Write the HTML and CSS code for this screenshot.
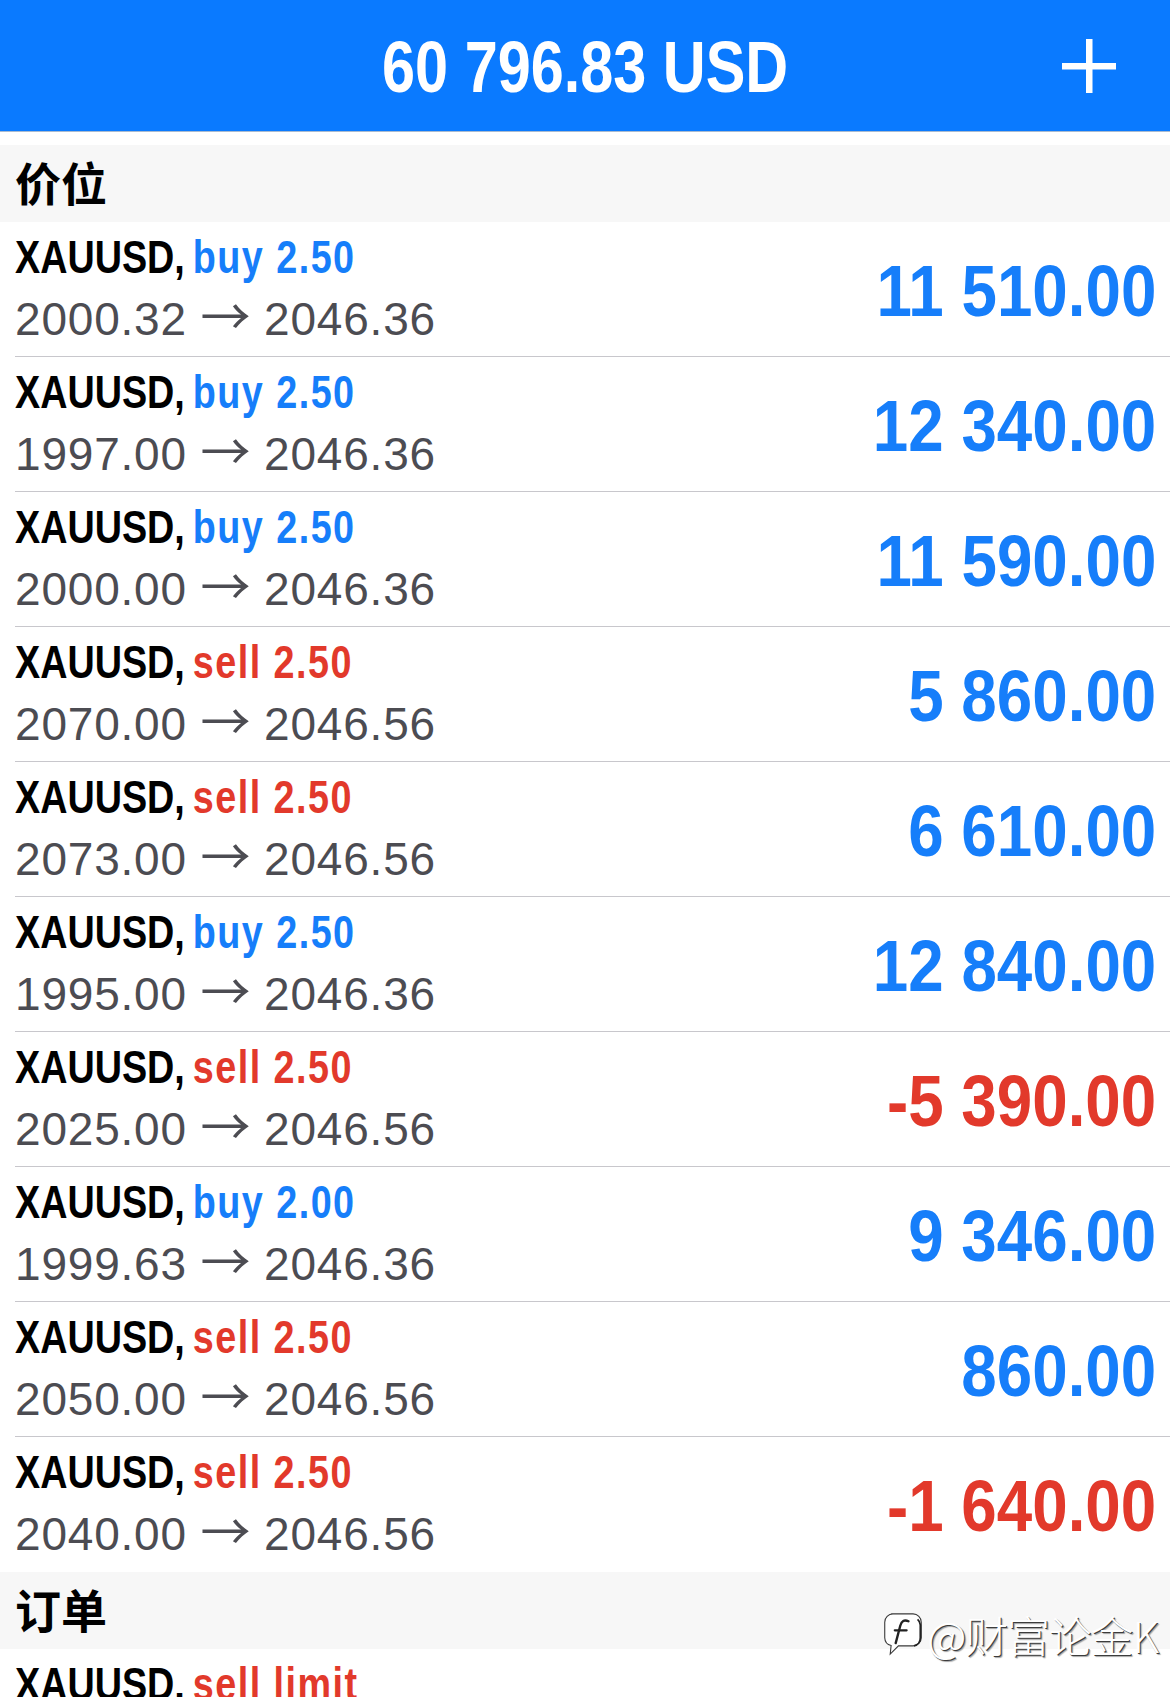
FILE: index.html
```html
<!DOCTYPE html>
<html lang="zh">
<head>
<meta charset="utf-8">
<title>Trade</title>
<link rel="stylesheet" href="styles.css">
</head>
<body>
<header class="navbar">
  <div class="nav-title">60 796.83 USD</div>
  <svg class="nav-add" viewBox="0 0 54 54" width="54" height="54" aria-label="add">
    <rect x="24" y="0" width="6.5" height="54" fill="#fff"/>
    <rect x="0" y="24" width="54" height="6.5" fill="#fff"/>
  </svg>
</header>
<main class="content">
  <section class="section">
    <h2 class="section-header">价位</h2>
    <div class="row"><div class="row-inner"><div class="info"><div class="title-line">XAUUSD, <span class="buy">buy 2.50</span></div><div class="price-line">2000.32 <span class="arrow">→</span> 2046.36</div></div><div class="profit pos">11 510.00</div></div></div>
    <div class="row"><div class="row-inner"><div class="info"><div class="title-line">XAUUSD, <span class="buy">buy 2.50</span></div><div class="price-line">1997.00 <span class="arrow">→</span> 2046.36</div></div><div class="profit pos">12 340.00</div></div></div>
    <div class="row"><div class="row-inner"><div class="info"><div class="title-line">XAUUSD, <span class="buy">buy 2.50</span></div><div class="price-line">2000.00 <span class="arrow">→</span> 2046.36</div></div><div class="profit pos">11 590.00</div></div></div>
    <div class="row"><div class="row-inner"><div class="info"><div class="title-line">XAUUSD, <span class="sell">sell 2.50</span></div><div class="price-line">2070.00 <span class="arrow">→</span> 2046.56</div></div><div class="profit pos">5 860.00</div></div></div>
    <div class="row"><div class="row-inner"><div class="info"><div class="title-line">XAUUSD, <span class="sell">sell 2.50</span></div><div class="price-line">2073.00 <span class="arrow">→</span> 2046.56</div></div><div class="profit pos">6 610.00</div></div></div>
    <div class="row"><div class="row-inner"><div class="info"><div class="title-line">XAUUSD, <span class="buy">buy 2.50</span></div><div class="price-line">1995.00 <span class="arrow">→</span> 2046.36</div></div><div class="profit pos">12 840.00</div></div></div>
    <div class="row"><div class="row-inner"><div class="info"><div class="title-line">XAUUSD, <span class="sell">sell 2.50</span></div><div class="price-line">2025.00 <span class="arrow">→</span> 2046.56</div></div><div class="profit neg">-5 390.00</div></div></div>
    <div class="row"><div class="row-inner"><div class="info"><div class="title-line">XAUUSD, <span class="buy">buy 2.00</span></div><div class="price-line">1999.63 <span class="arrow">→</span> 2046.36</div></div><div class="profit pos">9 346.00</div></div></div>
    <div class="row"><div class="row-inner"><div class="info"><div class="title-line">XAUUSD, <span class="sell">sell 2.50</span></div><div class="price-line">2050.00 <span class="arrow">→</span> 2046.56</div></div><div class="profit pos">860.00</div></div></div>
    <div class="row"><div class="row-inner"><div class="info"><div class="title-line">XAUUSD, <span class="sell">sell 2.50</span></div><div class="price-line">2040.00 <span class="arrow">→</span> 2046.56</div></div><div class="profit neg">-1 640.00</div></div></div>
  </section>
  <section class="section">
    <h2 class="section-header">订单
      <div class="watermark">
        <svg class="wm-logo" viewBox="0 0 46 50" width="42" height="46" aria-hidden="true">
          <path d="M10 3 H34 a9 9 0 0 1 9 9 V29 a9 9 0 0 1 -9 9 H18 l-9 9 l1 -9.5 a9 9 0 0 1 -7 -8.5 V12 a9 9 0 0 1 9 -9z" fill="#fff" stroke="#3a3a3a" stroke-width="1.2"/>
          <path d="M39 9 a9 9 0 0 1 3 6 V29 a9 9 0 0 1 -7 9" fill="none" stroke="#222" stroke-width="2"/>
          <path d="M29 11 q-7 -3 -9 5 l-5 19" fill="none" stroke="#222" stroke-width="2.6" stroke-linecap="round"/>
          <path d="M14 21 h13" fill="none" stroke="#222" stroke-width="2.4" stroke-linecap="round"/>
        </svg>
        <span class="wm-text">@财富论金K</span>
      </div>
    </h2>
    <div class="row"><div class="row-inner"><div class="info"><div class="title-line">XAUUSD, <span class="sell">sell limit</span></div></div></div></div>
  </section>
</main>
</body>
</html>
```
FILE: styles.css
```css
* {
  box-sizing: border-box;
  margin: 0;
  padding: 0;
}

body {
  margin: 0;
  background: #ffffff;
  font-family: "Liberation Sans", Arial, sans-serif;
  color: #000;
}

.navbar {
  display: grid;
  grid-template-columns: 1fr auto 1fr;
  align-items: center;
  height: 132px;
  background: #0a7aff;
  border-bottom: 1px solid #a9bbd0;
}

.nav-title {
  grid-column: 2;
  font-family: "Liberation Sans", Arial, sans-serif;
  font-weight: 700;
  font-size: 72px;
  line-height: 128px;
  padding-top: 3px;
  color: #ffffff;
  white-space: nowrap;
  transform: scaleX(0.825);
  transform-origin: center;
}

.nav-add {
  grid-column: 3;
  justify-self: end;
  margin-right: 54px;
  display: block;
}

.content {
  padding-top: 13px;
}

.section-header {
  position: relative;
  height: 77px;
  padding-left: 15px;
  background: #f7f7f7;
  font-family: "Noto Sans CJK SC", sans-serif;
  font-weight: 700;
  font-size: 46px;
  line-height: 72px;
  color: #000;
}

.row {
  padding-left: 15px;
}

.row-inner {
  display: flex;
  justify-content: space-between;
  align-items: flex-start;
  height: 135px;
  padding: 4px 14px 6px 0;
  border-bottom: 1px solid #c8c7cc;
}

.row:last-child .row-inner {
  border-bottom: none;
}

.title-line {
  font-family: "Liberation Sans", Arial, sans-serif;
  font-weight: 700;
  font-size: 46px;
  line-height: 62px;
  white-space: nowrap;
  color: #000;
  word-spacing: -3px;
  transform: scaleX(0.82);
  transform-origin: left center;
}

.buy,
.sell {
  letter-spacing: 1.8px;
  word-spacing: 0;
}

.buy {
  color: #167efa;
}

.sell {
  color: #e2392b;
}

.price-line {
  font-family: "Liberation Sans", Arial, sans-serif;
  font-weight: 400;
  font-size: 46px;
  line-height: 62px;
  letter-spacing: 0.8px;
  color: #4c4c52;
  white-space: nowrap;
}

.arrow {
  font-family: "Noto Sans CJK SC", sans-serif;
  font-size: 50px;
  line-height: 1;
  font-weight: 400;
  letter-spacing: 0;
}

.profit {
  margin-top: 29px;
  font-family: "Liberation Sans", Arial, sans-serif;
  font-weight: 700;
  font-size: 72px;
  line-height: 72px;
  white-space: nowrap;
  transform: scaleX(0.885);
  transform-origin: right center;
}

.profit.pos {
  color: #167efa;
}

.profit.neg {
  color: #e2392b;
}

.watermark {
  position: absolute;
  right: 12px;
  top: 37px;
  display: flex;
  align-items: center;
  gap: 3px;
}

.wm-logo {
  display: block;
}

.wm-text {
  font-family: "Noto Sans CJK SC", sans-serif;
  font-weight: 300;
  font-size: 43px;
  line-height: 50px;
  letter-spacing: -1.2px;
  color: #ffffff;
  text-shadow: 1px 1px 0 #3c3c3c, 2px 2px 1px rgba(0, 0, 0, 0.35);
  white-space: nowrap;
}
```
